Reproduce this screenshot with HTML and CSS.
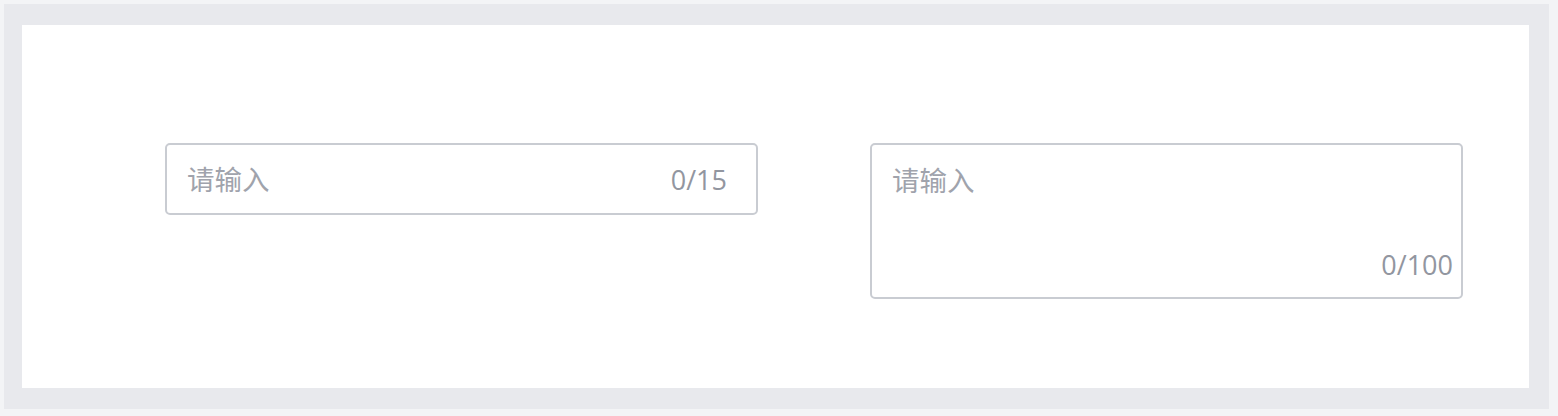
FILE: index.html
```html
<!DOCTYPE html>
<html lang="zh-CN">
<head>
  <meta charset="UTF-8">
  <meta name="viewport" content="width=device-width, initial-scale=1.0">
  <title>Input 字数统计</title>
  <link rel="stylesheet" href="styles.css">
</head>
<body>
  <div class="frame">
    <div class="demo">
      <div class="field field-input">
        <input type="text" maxlength="15" placeholder="请输入">
        <span class="count">0/15</span>
      </div>
      <div class="field field-textarea">
        <textarea maxlength="100" placeholder="请输入"></textarea>
        <span class="count">0/100</span>
      </div>
    </div>
  </div>
</body>
</html>
```

FILE: styles.css
```css
body {
  margin: 0;
  background: #f3f4f6;
  font-family: "Open Sans", "Noto Sans CJK SC", sans-serif;
}

.frame {
  margin: 4px 9px 7px 4px;
  padding: 21px 20px 21px 18px;
  background: #e8e9ed;
}

.demo {
  display: flex;
  align-items: flex-start;
  gap: 112px;
  height: 363px;
  padding: 118px 0 0 143px;
  box-sizing: border-box;
  background: #fff;
}

.field {
  position: relative;
  width: 593px;
  border: 2px solid #c9ccd2;
  border-radius: 5px;
  box-sizing: border-box;
}

.field-input {
  height: 72px;
}

.field-textarea {
  height: 156px;
}

input, textarea {
  display: block;
  width: 100%;
  height: 100%;
  box-sizing: border-box;
  border: none;
  outline: none;
  background: transparent;
  font-family: inherit;
  font-size: 27.5px;
  color: #333;
  resize: none;
}

input {
  padding: 0 100px 0 20px;
}

textarea {
  padding: 17px 20px;
  line-height: 1.4;
}

input::placeholder, textarea::placeholder {
  color: #a0a3ac;
}

.count {
  position: absolute;
  font-size: 27px;
  line-height: 1;
  color: #9296a0;
}

.field-input .count {
  right: 29px;
  top: 50%;
  transform: translateY(-50%);
}

.field-textarea .count {
  right: 8px;
  bottom: 19px;
}
```
